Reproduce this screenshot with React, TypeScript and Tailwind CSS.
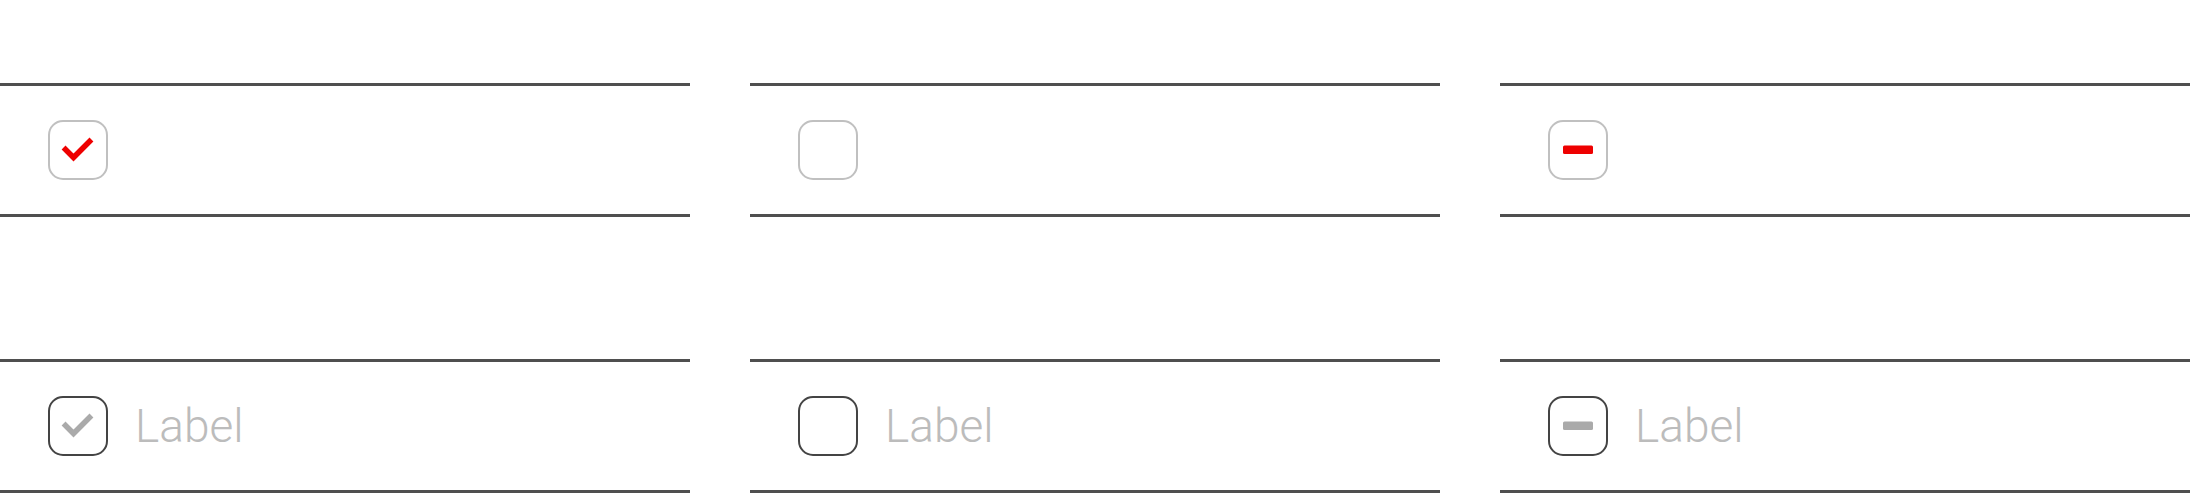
import type { FC } from "react";

type CheckState = "checked" | "unchecked" | "indeterminate";

type CheckboxProps = {
  state: CheckState;
  dark: boolean;
};

const Checkbox: FC<CheckboxProps> = (props) => {
  const mark = props.dark ? "#aaaaaa" : "#ee0000";
  return (
    <div
      className={`flex h-[60px] w-[60px] shrink-0 items-center justify-center rounded-[15px] border-2 bg-white ${
        props.dark ? "border-[#444444]" : "border-[#c0c0c0]"
      }`}
    >
      <svg className="shrink-0" width="60" height="60" viewBox="0 0 60 60" fill="none">
        {props.state === "checked" && (
          <path
            d="M17.5 29.5 L25.5 37.5 L41.5 21.5"
            stroke={mark}
            strokeWidth="5.5"
            strokeLinecap="square"
          />
        )}
        {props.state === "indeterminate" && (
          <rect x="15" y="25.5" width="30" height="8.5" rx="1.5" fill={mark} />
        )}
      </svg>
    </div>
  );
};

type RowProps = {
  state: CheckState;
  label?: string;
};

const Row: FC<RowProps> = (props) => {
  const dark = props.label !== undefined;
  return (
    <div className="flex h-[134px] items-center border-y-[3px] border-[#4f4f4f] pl-[48px]">
      <Checkbox state={props.state} dark={dark} />
      {props.label && (
        <span className="ml-[27px] pb-[1px] font-['Roboto',sans-serif] text-[46px] font-light leading-none text-[#bcbcbc]">
          {props.label}
        </span>
      )}
    </div>
  );
};

const states: CheckState[] = ["checked", "unchecked", "indeterminate"];

export default function App() {
  return (
    <div className="h-[494px] w-[2190px] overflow-hidden bg-white pt-[83px]">
      <div className="grid grid-cols-3 gap-x-[60px] gap-y-[142px]">
        {states.map((s) => (
          <Row key={`plain-${s}`} state={s} />
        ))}
        {states.map((s) => (
          <Row key={`label-${s}`} state={s} label="Label" />
        ))}
      </div>
    </div>
  );
}
